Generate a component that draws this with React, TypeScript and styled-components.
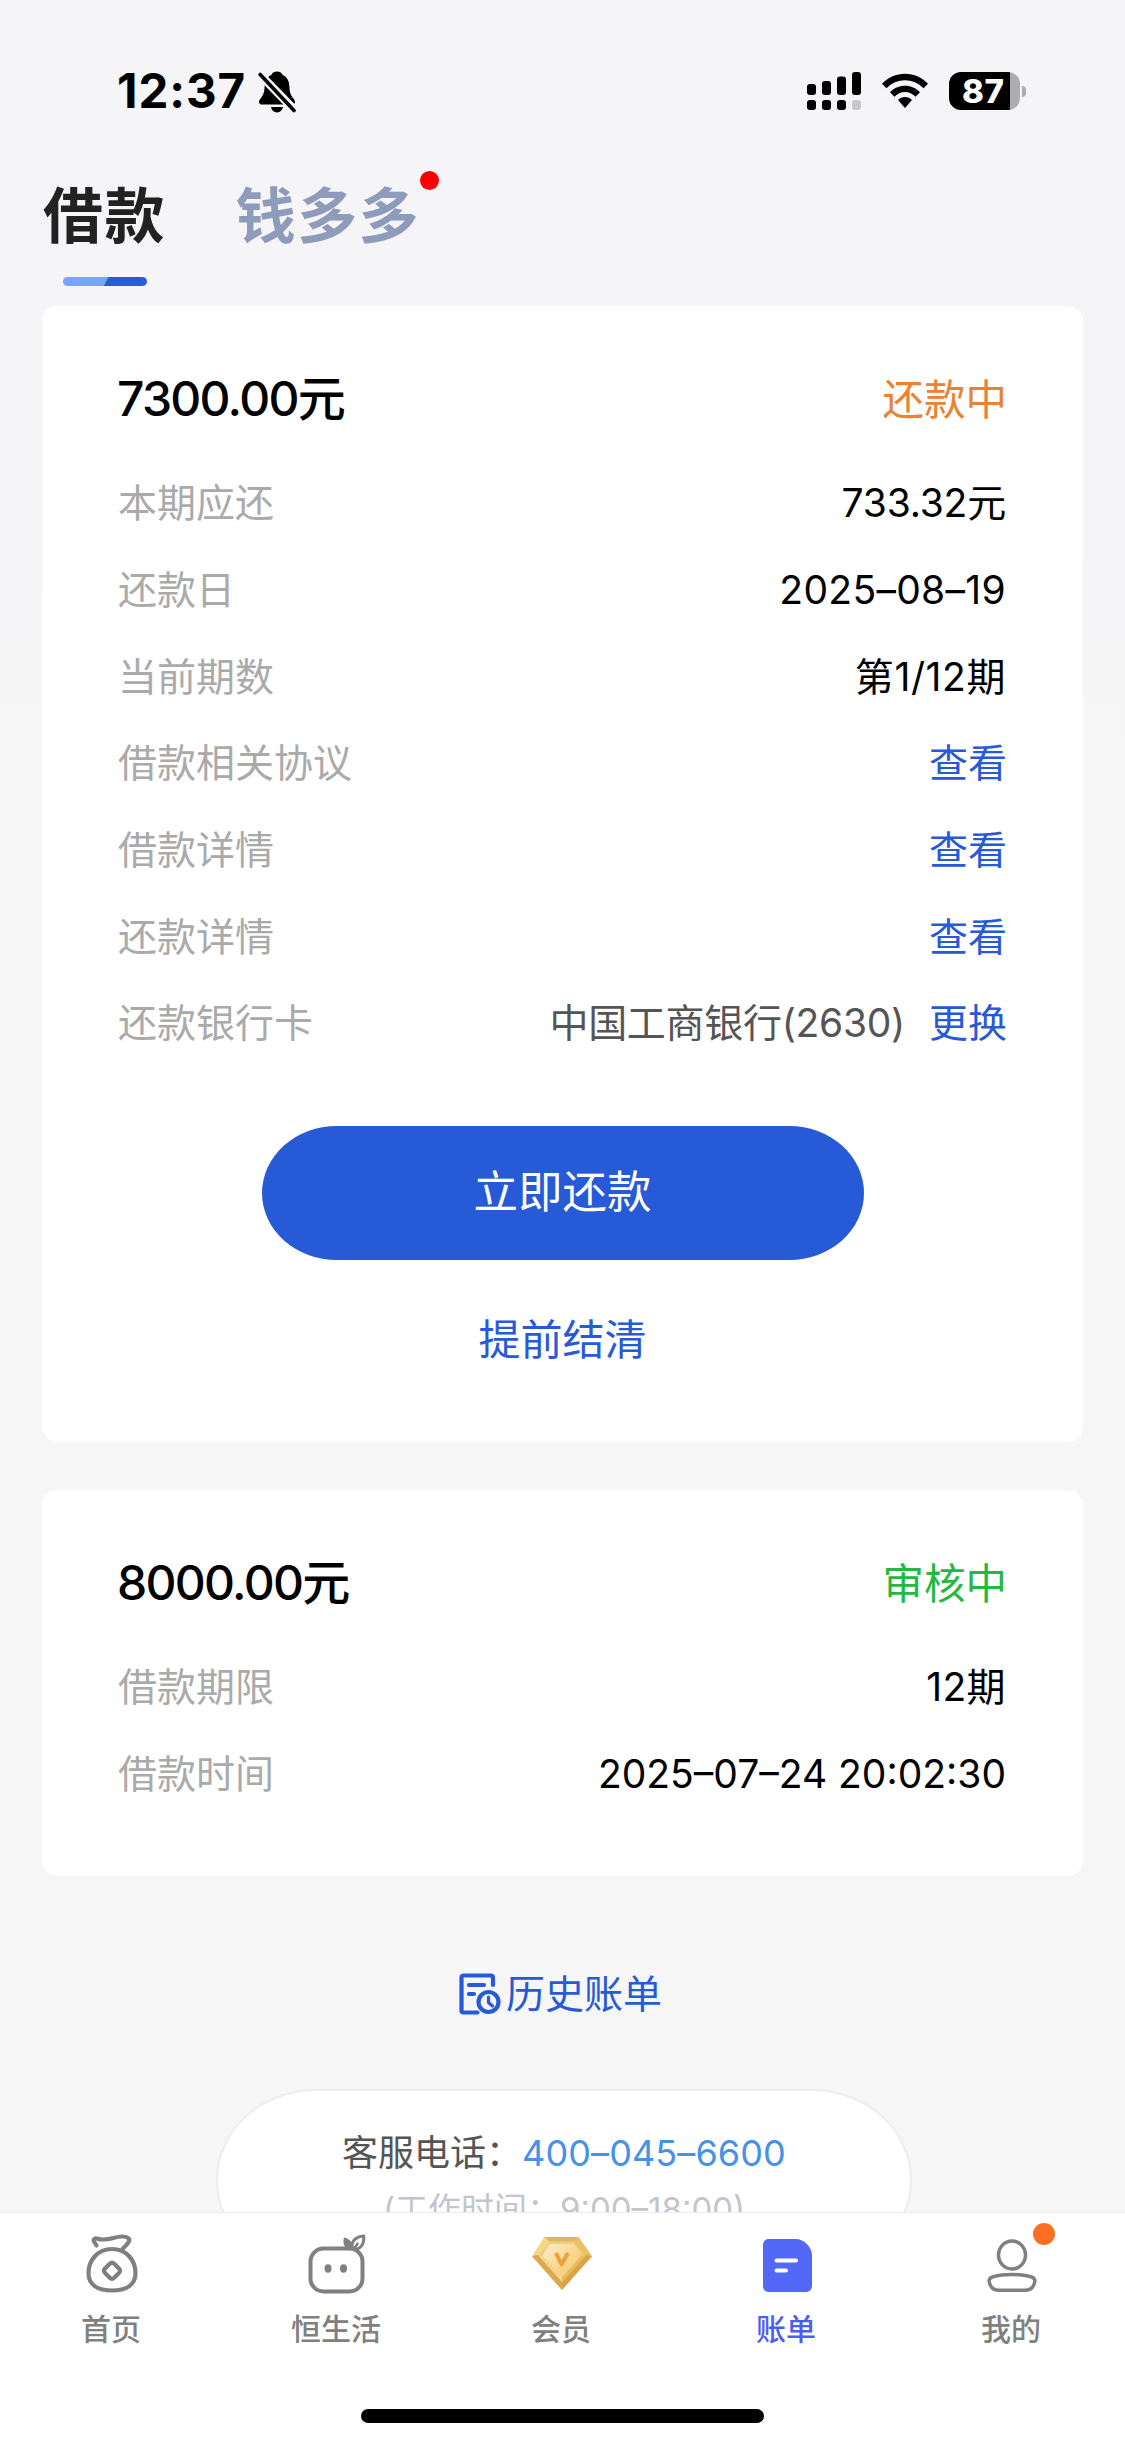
import React from "react";
import styled, { createGlobalStyle } from "styled-components";

const Global = createGlobalStyle`
  html, body { margin: 0; padding: 0; }
  * { box-sizing: border-box; }
  body {
    font-family: Inter, "Noto Sans CJK SC", sans-serif;
    -webkit-font-smoothing: antialiased;
  }
  svg { display: block; flex: none; }
`;

const Screen = styled.div`
  width: 1125px;
  height: 2446px;
  display: flex;
  flex-direction: column;
  overflow: hidden;
  background: linear-gradient(#f5f5f8 0, #f5f5f8 480px, #f6f6f6 800px);
`;

const StatusBar = styled.header`
  height: 142px;
  padding: 71px 99px 0 117px;
  display: flex;
  align-items: flex-start;
  justify-content: space-between;
`;

const StatusGroup = styled.div<{ $gap: number }>`
  display: flex;
  align-items: flex-start;
  gap: ${(p) => p.$gap}px;
`;

const Clock = styled.span`
  font-size: 47.5px;
  line-height: 40px;
  font-weight: 750;
  width: 131px;
  letter-spacing: 0.9px;
  white-space: nowrap;
  color: #000;
`;

const Battery = styled.div`
  display: flex;
  align-items: center;
  gap: 2px;
  margin-top: 1px;
`;

const BatteryBody = styled.div`
  width: 71px;
  height: 38px;
  border-radius: 12px;
  background: linear-gradient(90deg, #000 61px, #adadaf 61px);
  color: #fff;
  font-size: 33px;
  line-height: 38px;
  font-weight: 800;
  padding-left: 13px;
  letter-spacing: 0.5px;
`;

const BatteryCap = styled.div`
  width: 4px;
  height: 11px;
  border-radius: 0 4px 4px 0;
  background: #adadaf;
`;

const Tabs = styled.nav`
  height: 164px;
  padding-left: 43px;
  display: flex;
  align-items: flex-start;
  gap: 70px;
`;

const Tab = styled.div<{ $active?: boolean }>`
  position: relative;
  margin-top: 29px;
  font-size: 60px;
  line-height: 90px;
  letter-spacing: 1.4px;
  font-weight: 700;
  color: ${(p) => (p.$active ? "#222" : "#8f9bbb")};
`;

const TabMark = styled.div`
  width: 84px;
  height: 9px;
  margin: 16px 0 0 20px;
  border-radius: 5px;
  background: linear-gradient(118deg, #7aa4fa 51%, #2b5cd6 51.5%);
`;

const TabDot = styled.i`
  position: absolute;
  right: -19px;
  top: 0;
  width: 19px;
  height: 19px;
  border-radius: 50%;
  background: #fb0007;
`;

const Content = styled.main`
  flex: 1;
  min-height: 0;
  overflow: hidden;
  padding: 0 42px;
  display: flex;
  flex-direction: column;
  align-items: center;
`;

const Card = styled.section<{ $h: number }>`
  flex: none;
  width: 1041px;
  height: ${(p) => p.$h}px;
  border-radius: 15px;
  background: #fff;
  padding: 57px 76px 0;
  display: flex;
  flex-direction: column;
  & + & { margin-top: 48px; }
`;

const CardHead = styled.div`
  height: 72px;
  margin-bottom: 25px;
  display: flex;
  align-items: center;
  justify-content: space-between;
`;

const Amount = styled.strong`
  margin-left: -1px;
  font-size: 48px;
  line-height: 72px;
  font-weight: 500;
  letter-spacing: -1.7px;
  color: #000;
`;

const State = styled.span<{ $color: string }>`
  font-size: 41.5px;
  line-height: 72px;
  padding-top: 1px;
  color: ${(p) => p.$color};
`;

const Row = styled.div`
  height: 86.7px;
  flex: none;
  display: flex;
  align-items: center;
  justify-content: space-between;
  font-size: 39px;
  line-height: 58px;
`;

const Label = styled.span`
  color: #aaa;
`;

const Value = styled.span<{ $spacing?: number }>`
  margin-right: 1px;
  color: #000;
  letter-spacing: ${(p) => p.$spacing ?? 0}px;
`;

const Bank = styled.span`
  display: flex;
  gap: 24px;
  color: #555;
`;

const BankName = styled.span`
  letter-spacing: -0.3px;
`;

const Link = styled.a`
  color: #275ad6;
`;

const PayButton = styled.button`
  flex: none;
  align-self: center;
  width: 602px;
  height: 134px;
  margin-top: 59px;
  border: 0;
  border-radius: 75px / 67px;
  background: #275ad6;
  color: #fff;
  font-family: inherit;
  font-size: 44.5px;
  line-height: 67px;
`;

const SettleLink = styled(Link)`
  align-self: center;
  margin-top: 49px;
  font-size: 42px;
  line-height: 62px;
`;

const History = styled(Link)`
  flex: none;
  height: 60px;
  margin: 88px 4px 0 0;
  display: flex;
  align-items: center;
  gap: 5px;
  font-size: 39px;
  line-height: 58px;
`;

const Service = styled.div`
  flex: none;
  width: 696px;
  height: 182px;
  margin: 65px 0 0 3px;
  padding-top: 35px;
  border: 2px solid #ededf0;
  border-radius: 100px / 91px;
  background: #fff;
  display: flex;
  flex-direction: column;
  align-items: center;
`;

const ServiceLine = styled.div`
  font-size: 36px;
  line-height: 54px;
  color: #555;
  white-space: nowrap;
`;

const Phone = styled.a`
  color: #4592e6;
  letter-spacing: 0.1px;
`;

const Hours = styled.div`
  font-size: 33px;
  line-height: 50px;
  margin-top: 4px;
  color: #c3c5cd;
  white-space: nowrap;
`;

const TabBar = styled.footer`
  flex: none;
  height: 234px;
  border-top: 1px solid #ececec;
  background: #fff;
  display: flex;
  flex-direction: column;
  align-items: center;
`;

const TabBarItems = styled.div`
  width: 1125px;
  height: 196px;
  display: grid;
  grid-template-columns: repeat(5, 1fr);
`;

const TabBarItem = styled.div<{ $active?: boolean }>`
  padding: 18px 3px 0 0;
  display: flex;
  flex-direction: column;
  align-items: center;
  gap: 9px;
  font-size: 30px;
  line-height: 46px;
  font-weight: 500;
  color: ${(p) => (p.$active ? "#4c5df3" : "#808080")};
`;

const IconBox = styled.div`
  position: relative;
  width: 70px;
  height: 66px;
`;

const MineDot = styled.i`
  position: absolute;
  left: 57px;
  top: -8px;
  width: 22px;
  height: 22px;
  border-radius: 50%;
  background: #fc6f22;
`;

const HomeIndicator = styled.div`
  width: 403px;
  height: 14px;
  border-radius: 7px;
  background: #000;
`;

const BellOff = () => (
  <svg width="38" height="42" viewBox="0 0 38 42">
    <path d="M19 .5c3 0 5 1.500 5.600 3.400 4.600 2 6.600 6 6.800 11.600.2 6 1.200 8.600 4.200 12.200 2.500 3 1.500 5.800-1.800 5.800H4.200c-3.300 0-4.300-2.800-1.800-5.800 3-3.600 4-6.200 4.200-12.200.2-5.600 2.200-9.600 6.800-11.600C14 2 16 .5 19 .5z" />
    <path d="M13 36h12c-.6 3.400-2.800 5.500-6 5.500s-5.400-2.100-6-5.500z" />
    <path d="M0 1.500l38 39" stroke="#f5f5f8" strokeWidth="8.500" />
    <path d="M2.200 3.500L36 39.500" stroke="#000" strokeWidth="3.600" strokeLinecap="round" />
  </svg>
);

const Signal = () => (
  <svg width="54" height="39" viewBox="0 0 54 39">
    <rect x="0" y="13" width="9" height="11" rx="3" />
    <rect x="15" y="10" width="9" height="14" rx="3" />
    <rect x="30" y="5.500" width="9" height="18.500" rx="3" />
    <rect x="45" y="1" width="9" height="23" rx="3" />
    <rect x="0" y="29" width="9" height="10" rx="3" />
    <rect x="15" y="29" width="9" height="10" rx="3" />
    <rect x="30" y="29" width="9" height="10" rx="3" />
    <rect x="45" y="29" width="9" height="10" rx="3" fill="#c8c8ca" />
  </svg>
);

const Wifi = () => (
  <svg width="48" height="38" viewBox="0 0 48 38">
    <path d="M1 12.800C7.200 6.300 15.200 2.700 24 2.700s16.800 3.600 23 10.100L42.500 17.300C37.500 12 31 9.200 24 9.200S10.500 12 5.500 17.300z" />
    <path d="M9 21.200C13 17 18.200 14.700 24 14.700s11 2.300 15 6.500L34.500 25.700C31.700 22.700 28 21 24 21s-7.700 1.700-10.500 4.700z" />
    <path d="M17 29c1.900-1.900 4.300-3 7-3s5.100 1.100 7 3l-7 8z" />
  </svg>
);

const HistoryIcon = () => (
  <svg width="42" height="42" viewBox="0 0 42 42" fill="none" stroke="#275ad6" strokeWidth="4.200" strokeLinecap="round" strokeLinejoin="round">
    <path d="M34 12V4.500a2 2 0 0 0-2-2H4.500a2 2 0 0 0-2 2v33a2 2 0 0 0 2 2h14" />
    <path d="M10 12h15M10 21h5" />
    <circle cx="29.500" cy="29" r="10" />
    <path d="M29.500 24v5.500l4 3.500" strokeWidth="3.200" />
  </svg>
);

const Pouch = () => (
  <svg width="70" height="66" viewBox="0 0 70 66" fill="none" stroke="#808080" strokeWidth="4.200" strokeLinecap="round" strokeLinejoin="round">
    <path d="M36 18C21 18 12.500 30 12.500 42c0 12 9.500 17.500 23.500 17.500S59.500 54 59.500 42c0-12-8.500-24-23.500-24z" />
    <path d="M20.500 14.500l-2.500-4c-1-2 .8-3.600 3.500-2.800 10.500 3 16.500-2.200 24.500-2.200 6 0 8.500 2.300 6.800 5.300-1.500 2.700-3.800 4.700-6.300 7.200" />
    <path d="M33.800 32.700q2.200-2 4.400 0l4.800 4.800q2 2.200 0 4.400l-4.800 4.800q-2.200 2-4.400 0l-4.800-4.800q-2-2.200 0-4.400z" />
  </svg>
);

const Life = () => (
  <svg width="70" height="66" viewBox="0 0 70 66" fill="none" stroke="#808080" strokeWidth="4" strokeLinejoin="round">
    <rect x="9.500" y="17.500" width="52" height="43" rx="13" />
    <ellipse cx="27" cy="37.500" rx="3.500" ry="4.200" fill="#808080" stroke="none" />
    <ellipse cx="42.500" cy="37.500" rx="3.500" ry="4.200" fill="#808080" stroke="none" />
    <path d="M52 18C48.500 11 55 5.500 62.800 5c.5 7-2.300 13-9.300 13.500z" fill="#fff" strokeWidth="3" />
    <path d="M43 6.500c6 1 9 5.500 9 12.500h-6c-3-4-4.500-8-3-12.500z" fill="#808080" stroke="none" />
    <path d="M53 18l4-6" strokeWidth="2.500" />
  </svg>
);

const Diamond = () => (
  <svg width="70" height="66" viewBox="0 0 70 66">
    <defs>
      <linearGradient id="gem" x1="0" x2="1" y1="0" y2="1">
        <stop offset="0" stopColor="#faeed2" />
        <stop offset=".55" stopColor="#fbd68d" />
        <stop offset="1" stopColor="#f7c467" />
      </linearGradient>
    </defs>
    <path d="M18.500 6h34L66 25.500 36 59 6 25.500z" fill="#efce7c" />
    <path d="M18.500 6h34l-5 4.500H23z" fill="#ddb85f" />
    <path d="M18.500 6L6 25.500l6.500-1L23 10.500z" fill="#f3d888" />
    <path d="M52.500 6L66 25.500l-6.500-1L47.500 10.500z" fill="#e9c165" />
    <path d="M6 25l6-1 24 27v8z" fill="#dda94d" />
    <path d="M66 25l-6-1-24 27v8z" fill="#d9a548" />
    <path d="M12.500 24.500L36 51v-6.500L17.500 24.500z" fill="#f2d58e" />
    <path d="M59.500 24.500L36 51v-6.500l18.500-20z" fill="#e8bb5c" />
    <path d="M24 13h24l7.500 11.500L36 46.500 16.500 24.500z" fill="url(#gem)" />
    <path d="M30 22l5.500 11.500L42 22" fill="none" stroke="#eda13c" strokeWidth="4" strokeLinejoin="round" />
  </svg>
);

const Bill = () => (
  <svg width="70" height="66" viewBox="0 0 70 66">
    <path d="M18 8h26.500c9 0 16.500 8 16.500 17V54.500c0 4-2.500 6.500-6.500 6.500H18c-4 0-6-2.500-6-6.500V14.500C12 10.500 14 8 18 8z" fill="#5468f8" />
    <path d="M25.500 29.500h19.500M25.500 39.500h9.500" stroke="#fff" strokeWidth="4" strokeLinecap="round" />
  </svg>
);

const Mine = () => (
  <svg width="70" height="66" viewBox="0 0 70 66" fill="none" stroke="#808080" strokeWidth="3.500" strokeLinejoin="round">
    <ellipse cx="36" cy="24" rx="13.500" ry="14" />
    <path d="M36 43.500c8 0 14 .8 19 2.300 3.500 1 4.500 3.200 3.500 6.200-1.500 5-4 7.200-8.500 7.200H22c-4.500 0-7-2.200-8.500-7.200-1-3 0-5.200 3.500-6.200 5-1.500 11-2.300 19-2.300z" />
  </svg>
);

const loanRows = [
  { label: "本期应还", value: "733.32元", spacing: -0.2 },
  { label: "还款日", value: "2025–08–19", spacing: 0.3 },
  { label: "当前期数", value: "第1/12期", spacing: 0.6 },
];

const linkRows = ["借款相关协议", "借款详情", "还款详情"];

const navItems = [
  { label: "首页", icon: <Pouch /> },
  { label: "恒生活", icon: <Life /> },
  { label: "会员", icon: <Diamond /> },
  { label: "账单", icon: <Bill />, active: true },
  { label: "我的", icon: <Mine />, dot: true },
];

export default function App() {
  return (
    <Screen>
      <Global />
      <StatusBar>
        <StatusGroup $gap={10}>
          <Clock>12:37</Clock>
          <BellOff />
        </StatusGroup>
        <StatusGroup $gap={20}>
          <Signal />
          <Wifi />
          <Battery>
            <BatteryBody>87</BatteryBody>
            <BatteryCap />
          </Battery>
        </StatusGroup>
      </StatusBar>
      <Tabs>
        <Tab $active>
          借款
          <TabMark />
        </Tab>
        <Tab>
          钱多多
          <TabDot />
        </Tab>
      </Tabs>
      <Content>
        <Card $h={1136}>
          <CardHead>
            <Amount>7300.00元</Amount>
            <State $color="#e98231">还款中</State>
          </CardHead>
          {loanRows.map((r) => (
            <Row key={r.label}>
              <Label>{r.label}</Label>
              <Value $spacing={r.spacing}>{r.value}</Value>
            </Row>
          ))}
          {linkRows.map((label) => (
            <Row key={label}>
              <Label>{label}</Label>
              <Link>查看</Link>
            </Row>
          ))}
          <Row>
            <Label>还款银行卡</Label>
            <Bank>
              <BankName>中国工商银行(2630)</BankName>
              <Link>更换</Link>
            </Bank>
          </Row>
          <PayButton>立即还款</PayButton>
          <SettleLink>提前结清</SettleLink>
        </Card>
        <Card $h={386}>
          <CardHead>
            <Amount>8000.00元</Amount>
            <State $color="#21ba3e">审核中</State>
          </CardHead>
          <Row>
            <Label>借款期限</Label>
            <Value $spacing={0.4}>12期</Value>
          </Row>
          <Row>
            <Label>借款时间</Label>
            <Value>2025–07–24 20:02:30</Value>
          </Row>
        </Card>
        <History>
          <HistoryIcon />
          历史账单
        </History>
        <Service>
          <ServiceLine>
            客服电话：<Phone>400–045–6600</Phone>
          </ServiceLine>
          <Hours>(工作时间：9:00–18:00)</Hours>
        </Service>
      </Content>
      <TabBar>
        <TabBarItems>
          {navItems.map((n) => (
            <TabBarItem key={n.label} $active={n.active}>
              <IconBox>
                {n.icon}
                {n.dot && <MineDot />}
              </IconBox>
              {n.label}
            </TabBarItem>
          ))}
        </TabBarItems>
        <HomeIndicator />
      </TabBar>
    </Screen>
  );
}
